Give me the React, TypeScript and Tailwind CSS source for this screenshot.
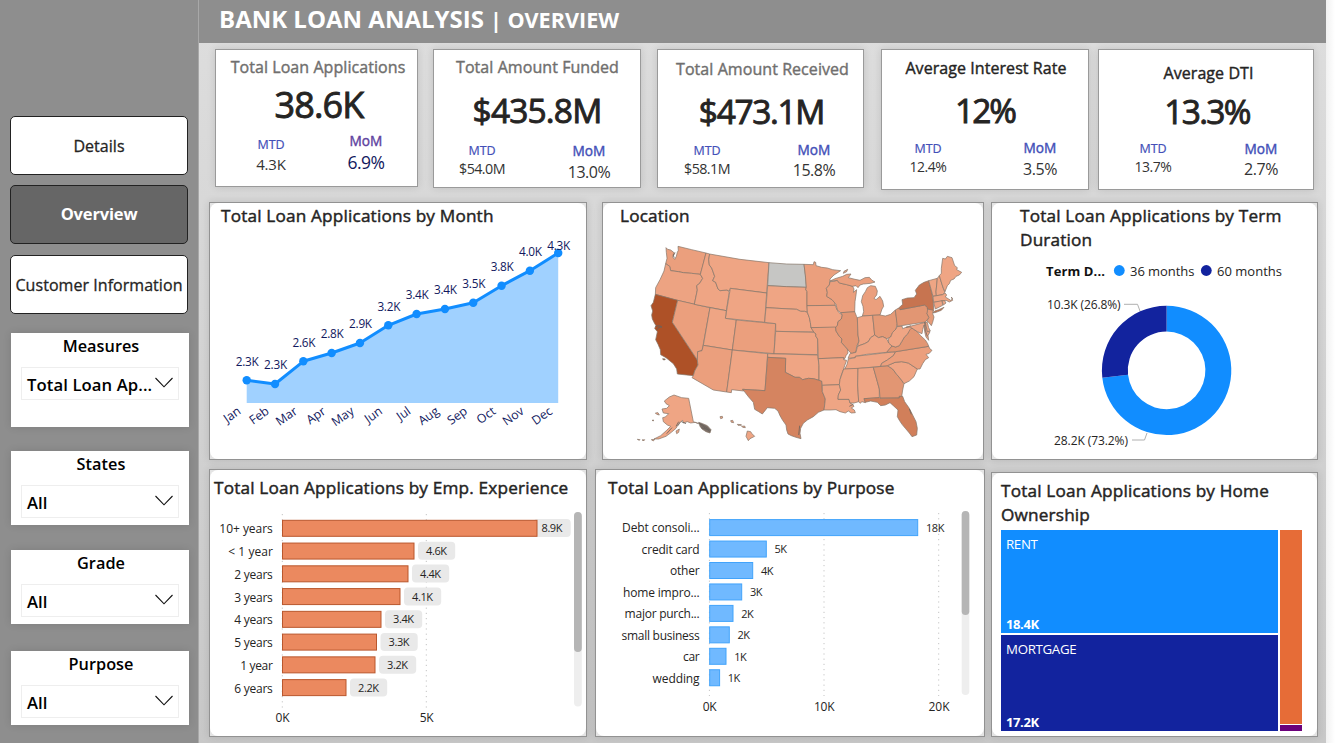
import React from "react";

const FONT = "font-['Open_Sans','Noto_Sans',sans-serif]";

/* ---------- Sidebar ---------- */

function NavButton({ label, active, className }: { label: string; active?: boolean; className?: string }) {
  return (
    <button
      className={`flex h-[59px] w-[178px] shrink-0 items-center justify-center whitespace-nowrap rounded-[5px] border border-[#222] ${
        active
          ? "bg-[#666] text-[16.5px] font-bold tracking-[-0.01em] text-white"
          : "bg-white text-[16px] tracking-[0.003em] text-[#252423] [-webkit-text-stroke:0.3px]"
      } ${className ?? ""}`}
    >
      {label}
    </button>
  );
}

function Slicer({ label, value, className }: { label: string; value: string; className: string }) {
  return (
    <div className={`ml-px flex w-[178px] shrink-0 flex-col items-center bg-white shadow-[0_0_8px_rgba(0,0,0,0.12)] ${className}`}>
      <div className="h-[26px] pl-[2px] text-[16.3px] font-semibold leading-[27px] tracking-[0.002em] text-black">{label}</div>
      <div className="mt-[8px] flex h-[33px] w-[158px] items-center justify-between border border-[#eee] pl-[5px] pr-[5px]">
        <span className="whitespace-nowrap pt-[3px] text-[16.7px] font-semibold leading-[24px] tracking-[0.005em] text-black">{value}</span>
        <svg width="18" height="11" viewBox="0 0 18 11" fill="none" stroke="#111" strokeWidth="1.1" className="-mt-[3px] shrink-0">
          <path d="M0.5 1 L9 9.8 L17.5 1" />
        </svg>
      </div>
    </div>
  );
}

/* ---------- KPI cards ---------- */

type Kpi = {
  title: string;
  value: string;
  mtd: string;
  mom: string;
  box: string;
  titleCls: string;
  valueCls: string;
  mtdCol: string;
  mtdVal: string;
  momCol: string;
  momLabel: string;
  momVal: string;
};

const kpis: Kpi[] = [
  {
    title: "Total Loan Applications", value: "38.6K", mtd: "4.3K", mom: "6.9%",
    box: "w-[203px] h-[138px]",
    titleCls: "mt-[7px] pl-[3px] text-[#706f6e]", valueCls: "mt-[8px] pl-[5px] text-[36px] tracking-[-0.025em]",
    mtdCol: "ml-[15px] mt-[12px]", mtdVal: "mt-px text-[15px] tracking-[-0.01em]",
    momCol: "ml-[15px] mt-[8px]", momLabel: "text-[#6043a0]", momVal: "mt-[3px] text-[17.5px] text-[#12195e]",
  },
  {
    title: "Total Amount Funded", value: "$435.8M", mtd: "$54.0M", mom: "13.0%",
    box: "ml-[15px] w-[208px] h-[139px]",
    titleCls: "mt-[7px] pl-[1px] text-[#706f6e]", valueCls: "mt-[13px] text-[33.5px] tracking-[-0.025em]",
    mtdCol: "ml-[8px] mt-[13px]", mtdVal: "text-[14.3px] tracking-[-0.04em]",
    momCol: "ml-[27px] mt-[13px]", momLabel: "text-[#4350b8]", momVal: "mt-[3px] text-[16px] text-[#333]",
  },
  {
    title: "Total Amount Received", value: "$473.1M", mtd: "$58.1M", mom: "15.8%",
    box: "ml-[16px] w-[207px] h-[139px]",
    titleCls: "mt-[9px] pl-[4px] text-[#706f6e]", valueCls: "mt-[12px] pl-[2px] text-[33.5px] tracking-[-0.04em]",
    mtdCol: "ml-[9px] mt-[12px]", mtdVal: "text-[14.3px] tracking-[-0.04em]",
    momCol: "ml-[27px] mt-[11px]", momLabel: "text-[#4350b8]", momVal: "mt-[2px] text-[16px] text-[#333]",
  },
  {
    title: "Average Interest Rate", value: "12%", mtd: "12.4%", mom: "3.5%",
    box: "ml-[17px] w-[208px] h-[141px]",
    titleCls: "mt-[8px] pl-[2px] text-[#252423]", valueCls: "mt-[12px] text-[33.5px] tracking-[-0.06em]",
    mtdCol: "ml-[6px] mt-[11px]", mtdVal: "text-[14px] tracking-[-0.035em]",
    momCol: "ml-[32px] mt-[10px]", momLabel: "text-[#4350b8]", momVal: "mt-[3px] text-[16px] text-[#333]",
  },
  {
    title: "Average DTI", value: "13.3%", mtd: "13.7%", mom: "2.7%",
    box: "ml-[9px] w-[216px] h-[141px]",
    titleCls: "mt-[13px] pl-[5px] text-[#252423]", valueCls: "mt-[8px] pl-[2px] text-[33.5px] tracking-[-0.05em]",
    mtdCol: "ml-[14px] mt-[10px]", mtdVal: "text-[14px] tracking-[-0.035em]",
    momCol: "ml-[28px] mt-[10px]", momLabel: "text-[#4350b8]", momVal: "mt-[2px] text-[16px] text-[#333]",
  },
];

function KpiCard({ k }: { k: Kpi }) {
  return (
    <div className={`flex shrink-0 flex-col border border-[#9a9a9a] bg-white shadow-[0_0_8px_rgba(0,0,0,0.12)] ${k.box}`}>
      <div className={`h-[20px] whitespace-nowrap text-center text-[16px] leading-[20px] tracking-[0.004em] [-webkit-text-stroke:0.4px] ${k.titleCls}`}>{k.title}</div>
      <div className={`h-[40px] text-center leading-[40px] text-[#252423] [-webkit-text-stroke:0.9px] ${k.valueCls}`}>{k.value}</div>
      <div className="flex">
        <div className={`w-[80px] text-center ${k.mtdCol}`}>
          <div className="h-[16px] text-[12.5px] leading-[16px] text-[#4350b8] [-webkit-text-stroke:0.2px]">MTD</div>
          <div className={`h-[20px] leading-[20px] text-[#333] ${k.mtdVal}`}>{k.mtd}</div>
        </div>
        <div className={`w-[80px] text-center ${k.momCol}`}>
          <div className={`h-[16px] text-[13.7px] leading-[16px] [-webkit-text-stroke:0.4px] ${k.momLabel}`}>MoM</div>
          <div className={`h-[20px] leading-[20px] tracking-[-0.03em] ${k.momVal}`}>{k.mom}</div>
        </div>
      </div>
    </div>
  );
}

/* ---------- Panels ---------- */

function Panel({ className, children }: { className: string; children: React.ReactNode }) {
  return (
    <section className={`shrink-0 border border-[#929292] bg-[#e4e4e4] shadow-[0_0_8px_rgba(0,0,0,0.12)] ${className}`}>
      <div className="flex h-full flex-col overflow-hidden rounded-[8px] bg-white">{children}</div>
    </section>
  );
}

function Title({ className, children }: { className: string; children: React.ReactNode }) {
  return (
    <h2 className={`shrink-0 whitespace-nowrap text-[17.2px] leading-[24px] tracking-[0.01em] text-[#252423] [-webkit-text-stroke:0.45px] ${className}`}>{children}</h2>
  );
}

function Label(props: {
  x: number; y: number; w?: number; size?: number; anchor?: "start" | "middle" | "end";
  fill?: string; bold?: boolean; children: string; rotate?: number;
}) {
  const { x, y, w, size = 12, anchor = "start", fill = "#252423", bold, children, rotate } = props;
  return (
    <text
      x={x} y={y} fontSize={size} textAnchor={anchor} fill={fill}
      fontWeight={bold ? 700 : 400} textLength={w}
      transform={rotate ? `rotate(${rotate} ${x} ${y})` : undefined}
    >
      {children}
    </text>
  );
}

/* ---------- Month area chart ---------- */

const months: [string, number, string, number][] = [
  ["Jan", 380.3, "2.3K", 366], ["Feb", 384, "2.3K", 368.7], ["Mar", 361.3, "2.6K", 346.7], ["Apr", 353, "2.8K", 337.7],
  ["May", 343, "2.9K", 328], ["Jun", 325.3, "3.2K", 310.7], ["Jul", 314, "3.4K", 299], ["Aug", 309, "3.4K", 294],
  ["Sep", 302.7, "3.5K", 288], ["Oct", 285.7, "3.8K", 271], ["Nov", 270.7, "4.0K", 256], ["Dec", 253, "4.3K", 249.7],
];
const mx = (i: number) => 246.7 + 28.32 * i;

function MonthChart() {
  const pts = months.map((m, i) => `${mx(i)},${m[1]}`).join(" ");
  return (
    <svg width="376" height="228" viewBox="210 231 376 228" className="shrink-0">
      <polygon points={`${mx(0)},403 ${pts} ${mx(11)},403`} fill="#a0d1ff" />
      <polyline points={pts} fill="none" stroke="#118dff" strokeWidth="3" strokeLinejoin="round" />
      {months.map((m, i) => (
        <g key={m[0]}>
          <circle cx={mx(i)} cy={m[1]} r="4.2" fill="#118dff" />
          <Label x={mx(i) + 0.6} y={m[3]} w={23} size={11.8} anchor="middle" fill="#12195e">{m[2]}</Label>
          <Label x={mx(i) - 5} y={413} size={12.3} anchor="end" fill="#12195e" rotate={-35}>{m[0]}</Label>
        </g>
      ))}
    </svg>
  );
}

/* ---------- Map ---------- */

const C = {
  base: "#efa584", mid: "#eb9f7d", il: "#e29673", oh: "#e59a77", ca: "#ae5127", tx: "#d58460", fl: "#d17f5a", ny: "#c77450", nd: "#c6c6c4",
};

const states: [string, string][] = [
  [C.mid, "108,38 113,43 122,45 131,52 134,56 128,66 134,73 139,64 142,52 145,46 144,34 185,44 228,54 217,98 211,118 185,115 160,113 145,110 122,107 119,94 107,86 111,70 109,52"],
  ["#eda382", "107,86 119,94 122,107 145,110 160,113 185,115 211,118 218,130 209,145 200,152 202,165 193,208 130,193 76,178 77,158 90,134 102,108"],
  [C.ca, "76,178 143,196 127,262 202,375 204,390 194,408 190,422 142,417 140,402 130,386 120,378 108,368 92,359 91,344 84,328 77,314 80,300 82,290 74,280 78,272 74,266 67,252 65,240 68,228 63,212 70,202"],
  [C.mid, "143,196 240,218 219,332 216,347 203,350 202,375 127,262"],
  [C.base, "228,54 239,57 236,74 238,90 245,99 249,110 254,124 248,137 257,142 264,162 270,167 290,165 298,170 289,227 193,208 202,165 200,152 209,145 218,130 211,118"],
  [C.base, "239,57 330,73 417,83 410,174 301,160 298,168 290,165 270,167 264,162 257,142 248,137 254,124 249,110 245,99 238,90 236,74"],
  [C.base, "301,160 410,174 404,262 286,250"],
  [C.base, "240,218 289,227 286,250 319,255 307,345 220,331"],
  [C.mid, "319,255 437,266 432,356 307,345"],
  [C.mid, "220,331 307,345 290,471 250,465 186,428 190,422 194,408 204,390 202,375 203,350 216,347"],
  [C.base, "307,345 413,356 405,467 338,463 341,468 305,464 304,473 290,471"],
  [C.nd, "417,83 470,87 522,88 526,120 529,157 470,155 413,152"],
  [C.base, "413,152 470,155 529,157 527,163 531,170 531,212 532,232 524,229 512,229 500,223 408,218"],
  [C.base, "408,218 500,223 512,229 524,229 532,232 538,248 541,262 543,278 552,291 437,289 437,266 404,262"],
  [C.base, "437,289 552,292 558,297 557,303 563,312 563,359 432,356"],
  [C.base, "413,356 563,360 567,392 567,436 550,431 535,430 518,434 508,427 495,427 482,420 466,412 467,370 413,367"],
  [C.tx, "413,367 467,370 466,412 482,420 495,427 508,427 518,434 535,430 550,431 575,438 577,470 586,492 584,510 582,525 565,532 550,545 532,555 520,565 512,580 510,595 513,611 498,607 484,602 474,597 470,585 468,570 458,556 450,542 444,528 434,520 412,518 405,527 397,537 386,530 374,523 370,502 356,486 338,463 405,467"],
  [C.mid, "522,88 550,89 552,80 557,82 558,92 575,97 592,99 608,104 632,107 612,120 600,132 598,150 589,160 592,172 590,184 606,194 614,202 616,211 531,212 531,170 527,163 529,157 526,120"],
  [C.base, "531,212 616,211 620,222 626,232 637,240 634,252 624,260 622,272 617,279 543,278 541,262 538,248 532,232"],
  [C.mid, "543,278 617,276 618,288 628,304 636,312 634,322 645,334 652,342 654,354 648,362 645,370 641,374 641,368 565,371 563,312 557,303 558,297 552,292"],
  [C.base, "565,371 641,368 641,374 650,376 644,392 641,402 634,420 630,434 628,449 577,451 575,438 567,436 567,392"],
  [C.base, "577,451 628,449 632,465 625,480 624,493 657,493 660,504 668,508 672,514 664,519 673,525 676,533 664,534 655,528 646,534 630,530 618,524 600,525 582,525 584,510 586,492 577,470"],
  [C.mid, "598,150 600,140 612,139 622,136 628,144 656,150 668,154 672,162 670,172 680,164 678,180 675,200 674,231 632,233 622,225 618,208 606,194 590,184 592,172 589,160"],
  [C.mid, "600,138 615,131 638,124 650,118 663,117 655,128 675,133 690,136 705,128 718,127 726,136 735,141 722,145 700,147 690,150 684,158 678,152 668,154 650,149 628,144 622,136"],
  [C.base, "650,110 640,115 642,109 653,103"],
  [C.mid, "712,158 722,152 736,154 742,168 740,180 732,190 738,194 750,184 758,198 761,214 756,222 750,240 728,241 697,243 701,230 699,214 694,200 698,182 706,170"],
  [C.il, "632,233 674,230 680,245 682,248 684,300 687,318 680,334 678,350 666,356 658,350 652,342 645,334 634,322 636,312 628,304 618,288 617,276 622,272 624,260 634,252 637,240"],
  [C.base, "682,248 700,243 728,241 734,300 722,308 715,320 704,326 690,331 682,335 687,318 684,300"],
  [C.oh, "728,241 750,240 766,243 782,238 796,225 802,265 798,282 788,292 782,306 770,311 758,305 745,308 734,300"],
  [C.base, "654,370 660,356 678,352 682,335 690,331 704,326 715,320 722,308 734,300 745,308 758,305 770,311 776,324 786,333 770,352 710,358 676,364 676,368"],
  [C.base, "644,403 651,388 655,372 676,368 676,364 770,353 797,350 790,362 772,375 755,385 752,394 690,400"],
  [C.base, "641,402 684,400 683,450 686,500 672,504 660,504 657,493 624,493 625,480 632,465 628,449 630,434"],
  [C.base, "684,400 730,397 742,440 748,462 748,488 702,491 706,503 696,500 690,505 686,500 683,450"],
  [C.il, "730,397 772,392 788,402 800,418 812,432 822,446 818,465 815,485 808,484 808,489 750,489 748,462 742,440"],
  [C.fl, "702,491 748,488 750,490 808,489 808,484 818,484 824,500 838,520 848,540 858,560 862,580 860,600 846,605 838,594 826,580 816,568 808,556 802,545 804,525 790,512 780,503 766,510 752,512 742,502 722,498 706,502"],
  [C.base, "772,392 795,382 815,380 835,384 862,402 852,425 838,438 822,446 812,432 800,418 788,402"],
  [C.mid, "752,394 755,385 772,375 790,362 797,350 896,334 900,342 906,346 898,355 888,358 896,368 886,374 878,386 870,402 862,402 835,384 815,380 795,382 772,392"],
  [C.il, "770,352 786,333 797,336 808,332 815,320 824,305 832,298 840,276 850,282 862,290 872,302 886,315 893,326 896,334 797,350"],
  [C.base, "776,324 775,311 782,306 788,292 798,282 802,274 816,273 818,281 828,277 842,272 846,278 840,284 832,298 824,305 815,320 808,332 797,336 786,333"],
  [C.il, "796,225 806,219 810,224 884,210 892,217 896,224 891,236 897,248 886,261 802,274"],
  [C.ny, "806,219 818,208 816,194 832,189 852,188 860,177 856,166 868,150 882,142 896,137 902,160 908,185 910,205 911,224 908,232 892,222 892,217 884,210 810,224"],
  [C.ny, "909,234 914,228 926,224 942,217 934,226 918,232"],
  [C.oh, "893,222 910,226 908,236 912,246 908,262 904,272 896,262 890,258 897,248 891,236"],
  [C.base, "828,277 886,262 892,290 900,290 894,302 896,316 888,306 884,290 882,270 878,284 876,296 862,290 850,282 840,276"],
  [C.base, "886,262 892,262 896,278 901,288 892,290"],
  [C.base, "896,137 922,130 920,150 918,170 919,182 909,184"],
  [C.base, "922,130 928,122 936,148 942,166 945,172 938,179 919,182 918,170 920,150"],
  [C.base, "928,122 934,115 934,100 938,70 946,72 952,64 966,68 974,92 982,98 980,104 995,112 988,120 978,124 972,132 962,136 958,146 952,152 945,170 940,160 936,148"],
  [C.base, "909,184 938,179 945,174 950,180 946,186 956,192 962,196 968,192 964,186 968,196 958,201 948,196 938,198 911,202"],
  [C.base, "911,202 936,197 938,211 916,222"],
  [C.base, "936,197 944,197 948,204 940,210"],
  [C.base, "190,560 176,490 155,488 132,480 118,486 103,498 108,506 118,512 110,520 96,522 100,534 116,536 106,546 98,548 100,560 112,570 122,574 110,586 92,602 72,612 86,612 108,604 124,592 138,580 146,566 158,556 160,564 172,560 182,564 196,562 206,566"],
  [C.base, "138,588 148,582 146,592 140,596"],
  ["#7d7068", "206,562 218,566 232,572 243,584 240,594 228,590 216,582 210,574"],
  [C.base, "76,534 84,533 88,540 80,538"],
  [C.base, "66,556 71,555 70,558"],
  [C.base, "22,613 30,614 28,616"],
  [C.base, "36,615 44,614 42,617"],
  [C.base, "64,614 74,613 70,618"],
  [C.base, "270,545 277,544 278,549 272,551"],
  [C.base, "302,557 308,556 311,563 304,562"],
  [C.base, "322,568 334,569 334,571 324,571"],
  [C.base, "335,574 344,573 346,578 338,577"],
  [C.base, "352,588 362,590 366,596 374,604 360,611 355,617 348,604"],
  ["#8a4a2c", "98,371 106,372 104,375 99,374"],
];

function UsMap() {
  return (
    <svg width="380" height="228" viewBox="-81 -12 1140 684" className="shrink-0">
      <g stroke="#857568" strokeWidth="2.1" strokeLinejoin="round">
        {states.map(([fill, points], i) => (
          <polygon key={i} points={points} fill={fill} />
        ))}
      </g>
      <path d="M76 274 L88 272 L96 276 L86 277 L82 284 M135 52 L129 60 L133 68 M206 564 L240 590 M212 566 L236 582 M214 578 L242 586" fill="none" stroke="#6a635d" strokeWidth="2.6" />
      <path d="M146 560 L138 574 M150 562 L144 572 M154 560 L168 566 M126 578 L110 596 M838 522 L844 538 M509 572 L506 600 M658 514 L670 508 M884 262 L886 286 L892 304" fill="none" stroke="#6a635d" strokeWidth="2.4" />
    </svg>
  );
}

/* ---------- Donut ---------- */

function arc(cx: number, cy: number, R: number, r: number, a0: number, a1: number) {
  const p = (rad: number, a: number) => `${cx + rad * Math.sin(a)} ${cy - rad * Math.cos(a)}`;
  const large = a1 - a0 > Math.PI ? 1 : 0;
  return `M${p(R, a0)} A${R} ${R} 0 ${large} 1 ${p(R, a1)} L${p(r, a1)} A${r} ${r} 0 ${large} 0 ${p(r, a0)} Z`;
}

function TermChart() {
  const split = 0.732 * Math.PI * 2;
  return (
    <svg width="325" height="207" viewBox="992 252 325 207" className="shrink-0">
      <Label x={1046} y={276} w={59} size={13} bold fill="#111">Term D...</Label>
      <circle cx={1119.3} cy={270.5} r={5.4} fill="#118dff" />
      <Label x={1130} y={276} w={64.5} size={13} fill="#252423">36 months</Label>
      <circle cx={1206.3} cy={270.5} r={5.4} fill="#12239e" />
      <Label x={1217} y={276} w={65} size={13} fill="#252423">60 months</Label>
      <path d={arc(1166.6, 370.4, 64.7, 38.8, 0, split)} fill="#118dff" />
      <path d={arc(1166.6, 370.4, 64.7, 38.8, split, Math.PI * 2)} fill="#12239e" />
      <path d="M1124 304.3 H1137.5 L1140 311 M1132 440 H1144.5 L1147 433" fill="none" stroke="#b0b0b0" strokeWidth="1" />
      <Label x={1047} y={309} w={73.5} size={12}>10.3K (26.8%)</Label>
      <Label x={1054} y={445} w={74} size={12}>28.2K (73.2%)</Label>
    </svg>
  );
}

/* ---------- Bar charts ---------- */

const emp: [string, number, string, number][] = [
  ["10+ years", 537, "8.9K", 53.5], ["< 1 year", 414, "4.6K", 44.5], ["2 years", 408, "4.4K", 38.5], ["3 years", 400, "4.1K", 38.5],
  ["4 years", 381, "3.4K", 38.5], ["5 years", 376.5, "3.3K", 38.5], ["1 year", 375, "3.2K", 32.5], ["6 years", 346, "2.2K", 38.5],
];

function EmpChart() {
  return (
    <svg width="376" height="236" viewBox="210 500 376 236" className="shrink-0">
      <path d="M282.3 514 V708 M426.3 514 V708" stroke="#c4c4c4" strokeWidth="1" strokeDasharray="1.2 4" />
      {emp.map(([name, end, val, w], i) => {
        const y = 520.3 + 22.76 * i;
        const bx = i === 0 ? 533.5 : end + 4;
        return (
          <g key={name}>
            <rect x={bx} y={y - 1.2} width={37.2} height={18} rx={4} fill="#e9e9e9" />
            <Label x={i === 0 ? 552 : bx + 18.6} y={y + 12.1} w={21} size={11} anchor="middle">{val}</Label>
            <rect x={282.5} y={y} width={end - 282.5} height={16} fill="#eb895f" stroke="#b9572d" strokeWidth="1" />
            <Label x={272.8} y={y + 13} w={w} size={12} anchor="end">{name}</Label>
          </g>
        );
      })}
      <Label x={282.5} y={722} w={14} size={12} anchor="middle">0K</Label>
      <Label x={426.7} y={722} w={14} size={12} anchor="middle">5K</Label>
      <rect x={574} y={512} width={7.8} height={194.5} rx={3.9} fill="#eeeeee" />
      <rect x={574} y={512} width={7.8} height={140} rx={3.9} fill="#b5b5b5" />
    </svg>
  );
}

const purposes: [string, number, string, number][] = [
  ["Debt consoli...", 917.7, "18K", 77.5], ["credit card", 766.3, "5K", 58], ["other", 752.7, "4K", 29.5], ["home impro...", 741.7, "3K", 76.5],
  ["major purch...", 733, "2K", 75], ["small business", 729.3, "2K", 78], ["car", 726, "1K", 16.5], ["wedding", 719.6, "1K", 47],
];

function PurposeChart() {
  return (
    <svg width="388" height="236" viewBox="596 500 388 236" className="shrink-0">
      <path d="M709.4 513 V696 M824 513 V696 M938.7 513 V696" stroke="#c4c4c4" strokeWidth="1" strokeDasharray="1.2 4" />
      {purposes.map(([name, end, val, w], i) => {
        const y = 519.6 + 21.45 * i;
        return (
          <g key={name}>
            <rect x={709.7} y={y} width={end - 709.7} height={16} fill="#70b9ff" stroke="#41a3fb" strokeWidth="1" />
            <Label x={end + 8.2} y={y + 12.2} w={i === 0 ? 18.5 : 12.5} size={11}>{val}</Label>
            <Label x={699.6} y={y + 12.8} w={w} size={12} anchor="end">{name}</Label>
          </g>
        );
      })}
      <Label x={709.7} y={711} w={14} size={12} anchor="middle">0K</Label>
      <Label x={824.3} y={711} w={20.5} size={12} anchor="middle">10K</Label>
      <Label x={939} y={711} w={21} size={12} anchor="middle">20K</Label>
      <rect x={961.7} y={511} width={7.6} height={184} rx={3.8} fill="#eeeeee" />
      <rect x={961.7} y={511} width={7.6} height={104} rx={3.8} fill="#b5b5b5" />
    </svg>
  );
}

/* ---------- Treemap ---------- */

function Tile({ name, value, className }: { name: string; value: string; className: string }) {
  return (
    <div className={`flex flex-col justify-between px-[5px] text-white ${className}`}>
      <span className="pt-[5px] text-[13.3px] leading-[18px] tracking-[-0.025em]">{name}</span>
      <span className="text-[13px] font-bold leading-[18px] tracking-[-0.03em]">{value}</span>
    </div>
  );
}

function Treemap() {
  return (
    <div className="ml-[9px] mt-[3px] flex h-[202px] w-[301px] shrink-0 gap-[2px]">
      <div className="flex w-[277px] flex-col gap-[2px]">
        <Tile name="RENT" value="18.4K" className="h-[103px] bg-[#118dff]" />
        <Tile name="MORTGAGE" value="17.2K" className="h-[96px] bg-[#12239e]" />
      </div>
      <div className="flex w-[22px] flex-col gap-[1px]">
        <div className="h-[194px] bg-[#e66c37]" />
        <div className="h-[6px] bg-[#6b007b]" />
      </div>
    </div>
  );
}

/* ---------- Page ---------- */

export default function App() {
  return (
    <div className={`flex h-[743px] w-[1335px] overflow-hidden bg-white ${FONT}`}>
      <aside className="flex w-[199px] shrink-0 flex-col border-r border-[#a8a8a8] bg-[#8e8e8e] pl-[10px] pt-[116px]">
        <NavButton label="Details" />
        <NavButton label="Overview" active className="mt-[10px]" />
        <NavButton label="Customer Information" className="mt-[11px]" />
        <Slicer label="Measures" value="Total Loan Ap..." className="mt-[19px] h-[94px]" />
        <Slicer label="States" value="All" className="mt-[24px] h-[74px]" />
        <Slicer label="Grade" value="All" className="mt-[25px] h-[74px]" />
        <Slicer label="Purpose" value="All" className="mt-[27px] h-[74px]" />
      </aside>

      <main className="flex w-[1127px] shrink-0 flex-col bg-linear-to-b from-[#dedede] to-[#c8c8c8]">
        <header className="flex h-[43px] shrink-0 items-baseline whitespace-nowrap bg-[#8e8e8e] pl-[20px] font-bold text-white">
          <h1 className="text-[24px] leading-[38px]">BANK LOAN ANALYSIS</h1>
          <span className="ml-[6px] text-[21.6px] leading-[38px]">| OVERVIEW</span>
        </header>

        <div className="flex h-[153px] shrink-0 items-start pl-[16px] pt-[6px]">
          {kpis.map((k) => (
            <KpiCard key={k.title} k={k} />
          ))}
        </div>

        <div className="mt-[6px] flex h-[258px] shrink-0 items-start pl-[10px]">
          <Panel className="h-[258px] w-[378px]">
            <Title className="mt-px h-[27px] pl-[11px]">Total Loan Applications by Month</Title>
            <MonthChart />
          </Panel>
          <Panel className="ml-[15px] h-[258px] w-[382px]">
            <Title className="mt-px h-[27px] pl-[17px]">Location</Title>
            <UsMap />
          </Panel>
          <Panel className="ml-[7px] h-[258px] w-[327px]">
            <Title className="mt-px h-[48px] pl-[28px]">
              Total Loan Applications by Term
              <br />
              Duration
            </Title>
            <TermChart />
          </Panel>
        </div>

        <div className="mt-[9px] flex shrink-0 items-start pl-[10px]">
          <Panel className="h-[268px] w-[378px]">
            <Title className="mt-[6px] h-[24px] pl-[4px]">Total Loan Applications by Emp. Experience</Title>
            <EmpChart />
          </Panel>
          <Panel className="ml-[8px] h-[268px] w-[390px]">
            <Title className="mt-[6px] h-[24px] pl-[12px]">Total Loan Applications by Purpose</Title>
            <PurposeChart />
          </Panel>
          <Panel className="ml-[6px] mt-[3px] h-[265px] w-[327px]">
            <Title className="mt-[6px] h-[48px] pl-[9px]">
              Total Loan Applications by Home
              <br />
              Ownership
            </Title>
            <Treemap />
          </Panel>
        </div>
      </main>
      <div className="h-full w-[9px] bg-linear-to-r from-[#f1f1f1] to-white" />
    </div>
  );
}
